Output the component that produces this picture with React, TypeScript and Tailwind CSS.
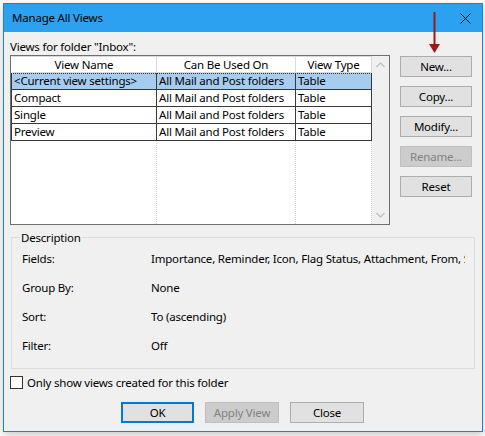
import React from "react";

const FONT = "font-['Segoe_UI','Noto_Sans',sans-serif]";
const TXT = "text-[11.5px] tracking-[-0.2px]";

const ROWS = [
  { name: "<Current view settings>", used: "All Mail and Post folders", type: "Table", selected: true },
  { name: "Compact", used: "All Mail and Post folders", type: "Table" },
  { name: "Single", used: "All Mail and Post folders", type: "Table" },
  { name: "Preview", used: "All Mail and Post folders", type: "Table" },
];

const DESC = [
  { k: "Fields:", v: "Importance, Reminder, Icon, Flag Status, Attachment, From, Subject, Received, Size, Categories" },
  { k: "Group By:", v: "None" },
  { k: "Sort:", v: "To (ascending)" },
  { k: "Filter:", v: "Off" },
];

function Btn({ label, disabled, primary, w = "w-[72px]" }: { label: string; disabled?: boolean; primary?: boolean; w?: string }) {
  const base = `${w} h-[21px] flex items-center justify-center ${TXT} leading-none`;
  if (disabled)
    return <div className={`${base} border border-[#bfbfbf] bg-[#cccccc] text-[#838383]`}>{label}</div>;
  if (primary)
    return <div className={`${base} border-2 border-[#0078d7] bg-[#e1e1e1] text-black`}>{label}</div>;
  return <div className={`${base} border border-[#adadad] bg-[#e1e1e1] text-black`}>{label}</div>;
}

export default function App() {
  return (
    <div className={`relative h-[436px] w-[485px] overflow-hidden bg-white pl-[3px] pt-[3px] ${FONT}`}>
      <div className="flex h-[429px] w-[480px] flex-col border border-[#1883d7] bg-[#f0f0f0] shadow-[0_3px_8px_rgba(0,0,0,0.22)]">
        {/* title bar */}
        <div className="flex h-[28px] shrink-0 items-center justify-between bg-[#2ba1ef] pl-[8px] pr-[11px]">
          <span className={`${TXT} text-black`}>Manage All Views</span>
          <svg width="11" height="11" viewBox="0 0 11 11" className="mt-[1px]">
            <path d="M0.5 0.5 L10.5 10.5 M10.5 0.5 L0.5 10.5" stroke="#000" strokeWidth="1" />
          </svg>
        </div>

        <div className="flex flex-col pl-[6px] pr-[9px]">
          <div className={`mt-[7px] h-[15px] ${TXT} leading-[15px] text-black`}>Views for folder "Inbox":</div>

          <div className="mt-[1px] flex gap-[10px]">
            {/* list view */}
            <div className="flex h-[170px] w-[380px] border border-[#6e6e6e] bg-white">
              <div className="flex w-[361px] flex-col">
                <div className={`flex h-[17px] ${TXT} text-black`}>
                  <div className="flex w-[146px] items-center justify-center border border-[#dadada] border-l-white">View Name</div>
                  <div className="flex w-[139px] items-center justify-center border border-l-0 border-[#dadada]">Can Be Used On</div>
                  <div className="flex w-[76px] items-center justify-center border border-l-0 border-[#dadada]">View Type</div>
                </div>
                {ROWS.map((r) => (
                  <div
                    key={r.name}
                    className={`relative flex h-[17px] ${TXT} leading-[16px] text-black ${r.selected ? "bg-[#a6cdef]" : ""}`}
                  >
                    <div className="w-[146px] overflow-hidden whitespace-nowrap border-b border-l border-r border-[#3a3a3a] pl-[2px]">{r.name}</div>
                    <div className="w-[139px] overflow-hidden whitespace-nowrap border-b border-r border-[#3a3a3a] pl-[2px]">{r.used}</div>
                    <div className="w-[76px] overflow-hidden whitespace-nowrap border-b border-r border-[#3a3a3a] pl-[2px]">{r.type}</div>
                    {r.selected && (
                      <div className="pointer-events-none absolute inset-0 border border-dotted border-[#333]" />
                    )}
                  </div>
                ))}
                <div className="flex flex-1">
                  <div className="w-[146px] border-r border-dotted border-[#d4d4d4]" />
                  <div className="w-[139px] border-r border-dotted border-[#d4d4d4]" />
                  <div className="w-[76px] border-r border-dotted border-[#d4d4d4]" />
                </div>
              </div>
              {/* scrollbar */}
              <div className="flex w-[17px] flex-col items-center justify-between bg-[#f0f0f0] py-[6px]">
                <svg width="9" height="6" viewBox="0 0 9 6">
                  <path d="M0.5 5 L4.5 1 L8.5 5" fill="none" stroke="#c3c3c3" strokeWidth="1.4" />
                </svg>
                <svg width="9" height="6" viewBox="0 0 9 6">
                  <path d="M0.5 1 L4.5 5 L8.5 1" fill="none" stroke="#c3c3c3" strokeWidth="1.4" />
                </svg>
              </div>
            </div>

            {/* side buttons */}
            <div className="mt-[1px] flex flex-col gap-[9px]">
              <Btn label="New..." />
              <Btn label="Copy..." />
              <Btn label="Modify..." />
              <Btn label="Rename..." disabled />
              <Btn label="Reset" />
            </div>
          </div>

          {/* description group */}
          <fieldset className="ml-[1px] mt-[5px] h-[139px] w-[464px] border border-[#dcdcdc] pl-[10px]">
            <legend className={`ml-[-2px] px-[1px] ${TXT} leading-[15px] text-black`}>Description</legend>
            <div className="-mt-[1px] flex flex-col">
              {DESC.map((d) => (
                <div key={d.k} className={`flex h-[29px] items-center ${TXT} text-black`}>
                  <div className="w-[129px] shrink-0">{d.k}</div>
                  <div className="w-[314px] overflow-hidden whitespace-nowrap">{d.v}</div>
                </div>
              ))}
            </div>
          </fieldset>

          <div className="mt-[6px] flex items-center gap-[4px]">
            <div className="h-[13px] w-[13px] border border-[#333] bg-white" />
            <span className={`${TXT} leading-[15px] text-black`}>Only show views created for this folder</span>
          </div>

          <div className="mt-[12px] flex gap-[11px] pl-[111px]">
            <Btn label="OK" primary w="w-[73px]" />
            <Btn label="Apply View" disabled w="w-[74px]" />
            <Btn label="Close" w="w-[74px]" />
          </div>
        </div>
      </div>

      {/* annotation arrow */}
      <svg className="absolute left-[428px] top-[12px]" width="13" height="42" viewBox="0 0 13 42">
        <line x1="6.5" y1="0" x2="6.5" y2="34" stroke="#9e1a1a" strokeWidth="2" />
        <path d="M1 32 L12 32 L6.5 41 Z" fill="#9e1a1a" />
      </svg>
    </div>
  );
}
